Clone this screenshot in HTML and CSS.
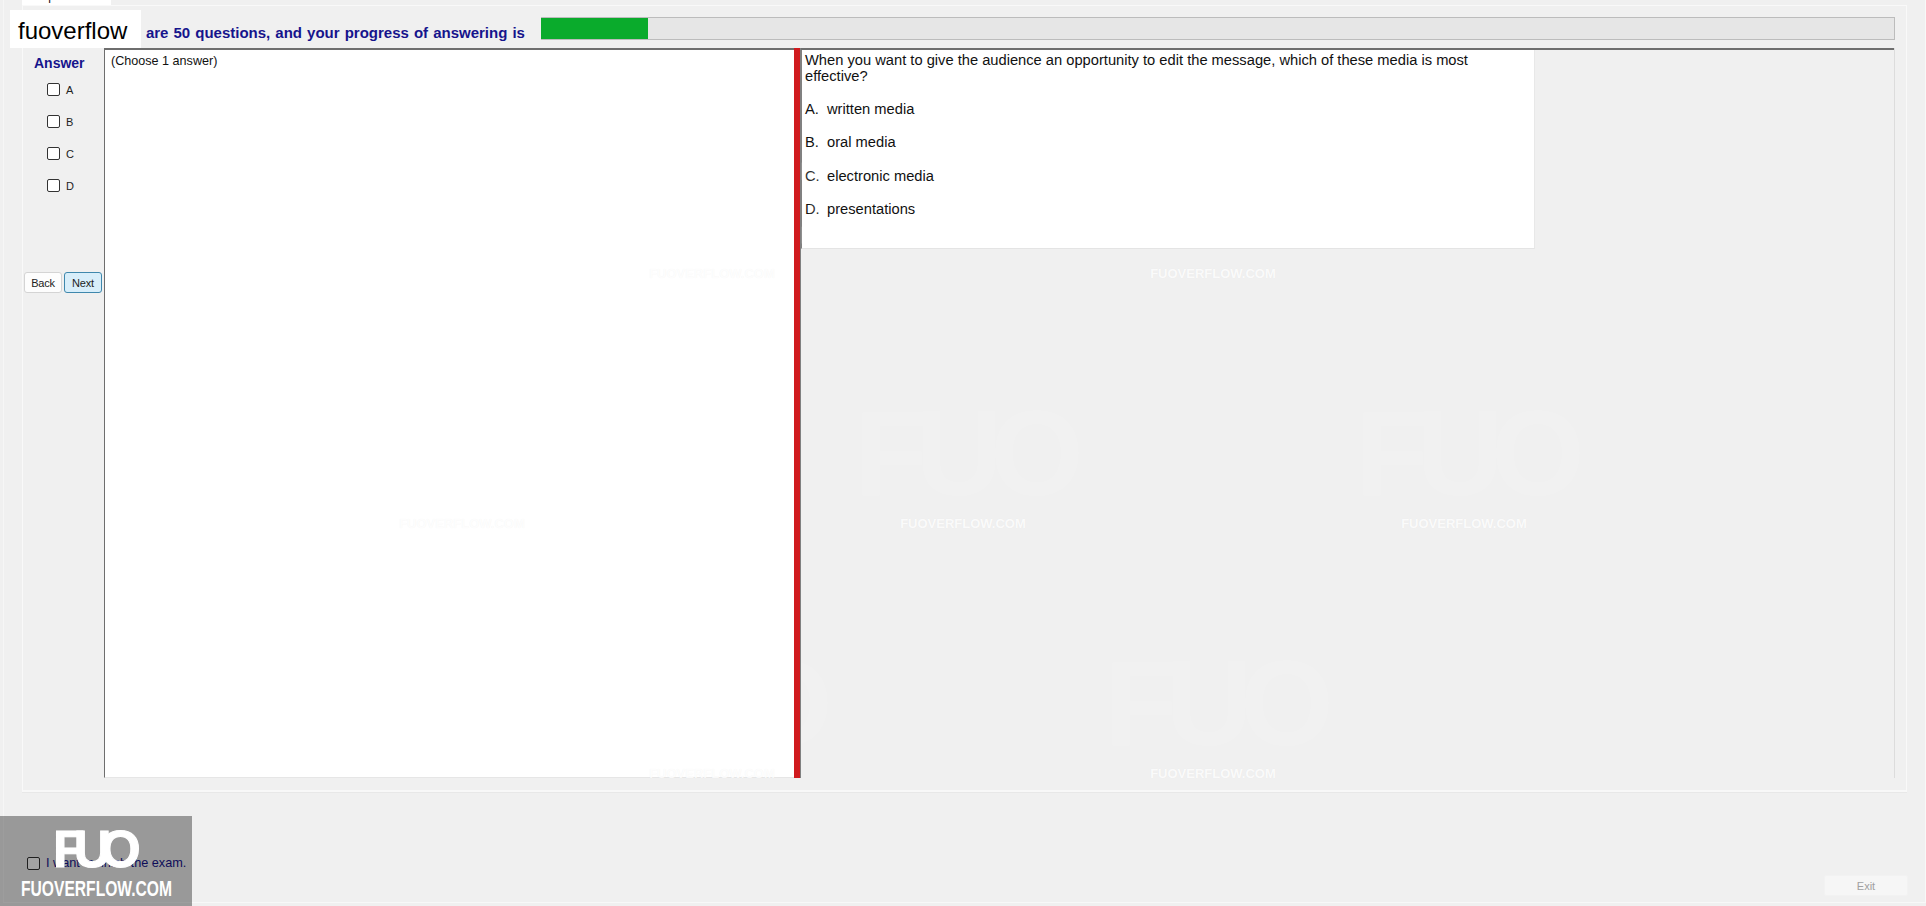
FILE: index.html
```html
<!DOCTYPE html>
<html>
<head>
	<meta charset="utf-8">
	<title>Exam</title>
	<link rel="stylesheet" href="styles.css">
</head>
<body>
	<div class="window">
		<div class="tabs">
			<div class="tab">Multiple Choices</div>
		</div>

		<div class="tabPage">
			<div class="progressRow">
				<span class="progressText"><span class="progressLead">There</span> are 50 questions, and your progress of answering is</span>
				<div class="progressBar"><div class="progressFill"></div></div>
			</div>

			<div class="examArea">
				<div class="answerCol">
					<div class="answerTitle">Answer</div>
					<label class="answerItem"><input type="checkbox" class="check">A</label>
					<label class="answerItem"><input type="checkbox" class="check">B</label>
					<label class="answerItem"><input type="checkbox" class="check">C</label>
					<label class="answerItem"><input type="checkbox" class="check">D</label>
					<div class="navBtns">
						<button class="navBtn">Back</button>
						<button class="navBtn navBtnActive">Next</button>
					</div>
				</div>

				<div class="choosePane">(Choose 1 answer)</div>
				<div class="splitter"></div>

				<div class="questionPane">
					<div class="questionBox">
						<p class="questionText">When you want to give the audience an opportunity to edit the message, which of these media is most effective?</p>
						<div class="options">
							<div class="option"><span class="optLetter">A.</span>written media</div>
							<div class="option"><span class="optLetter">B.</span>oral media</div>
							<div class="option"><span class="optLetter">C.</span>electronic media</div>
							<div class="option"><span class="optLetter">D.</span>presentations</div>
						</div>
					</div>
				</div>
			</div>
		</div>

		<div class="footer">
			<label class="finish"><input type="checkbox" class="check">I want to finish the exam.</label>
			<button class="exitBtn" disabled>Exit</button>
		</div>
	</div>

	<!-- things lying over the form -->
	<div class="brandBox">fuoverflow</div>

	<div class="watermarks">
		<div class="wmRow">
			<div class="wm"><div class="wmLogo">FUO</div><div class="wmText">FUOVERFLOW.COM</div></div>
			<div class="wm"><div class="wmLogo">FUO</div><div class="wmText">FUOVERFLOW.COM</div></div>
		</div>
		<div class="wmRow wmRowOffset">
			<div class="wm"><div class="wmLogo">FUO</div><div class="wmText">FUOVERFLOW.COM</div></div>
			<div class="wm"><div class="wmLogo">FUO</div><div class="wmText">FUOVERFLOW.COM</div></div>
			<div class="wm"><div class="wmLogo">FUO</div><div class="wmText">FUOVERFLOW.COM</div></div>
		</div>
		<div class="wmRow">
			<div class="wm"><div class="wmLogo">FUO</div><div class="wmText">FUOVERFLOW.COM</div></div>
			<div class="wm"><div class="wmLogo">FUO</div><div class="wmText">FUOVERFLOW.COM</div></div>
		</div>
	</div>

	<div class="logoBox">
		<div class="logoMark">FUO</div>
		<div class="logoText">FUOVERFLOW.COM</div>
	</div>
</body>
</html>
```

FILE: styles.css
```css
html,
body {
	margin: 0;
	padding: 0;
	background-color: #f0f0f0;
	font-family: "Liberation Sans", Arial, sans-serif;
	color: #111;
}

.window {
	box-sizing: border-box;
	width: 1923px;
	height: 903px;
	margin-left: 3px;
	padding-left: 18px;
	display: flex;
	flex-direction: column;
	border-left: 1px solid #f6f6f6;
	border-right: 1px solid #f8f8f8;
	border-bottom: 1px solid #f8f8f8;
}

.tabs {
	height: 5px;
	display: flex;
}

.tab {
	width: 89px;
	height: 5px;
	background-color: #fff;
	box-sizing: border-box;
	padding: 0 0 3px 1px;
	display: flex;
	align-items: flex-end;
	overflow: hidden;
	font-size: 12px;
	line-height: 12px;
	white-space: nowrap;
}

.tabPage {
	box-sizing: border-box;
	width: 1885px;
	height: 787px;
	border: 1px solid #f9f9f9;
	border-bottom: 2px solid #f8f8f8;
	box-shadow: 0 1px 0 #e8e8e8, 0 6px 0 -5px #f8f8f8;
}

.progressRow {
	height: 42px;
	display: flex;
	align-items: center;
	padding-left: 74px;
	padding-right: 11px;
}

.progressText {
	font-size: 15px;
	font-weight: bold;
	word-spacing: 0.9px;
	color: #16148c;
	white-space: nowrap;
	margin-top: 10px;
}

.progressLead {
	margin-right: 3px;
}

.progressBar {
	flex: 1;
	height: 23px;
	margin-left: 16px;
	margin-top: 3px;
	box-sizing: border-box;
	background-color: #e6e6e6;
	border: 1px solid #bcbcbc;
	border-left: none;
}

.progressFill {
	width: 107px;
	height: 21px;
	background-color: #0aab2c;
}

.examArea {
	height: 730px;
	margin-right: 11px;
	display: grid;
	grid-template-columns: 81px 690px 7px 1fr;
	border-right: 1px solid #dcdcdc;
}

.answerCol {
	display: flex;
	flex-direction: column;
	align-items: flex-start;
}

.answerTitle {
	font-size: 14px;
	font-weight: bold;
	color: #16148c;
	line-height: 16px;
	padding: 7px 0 0 11px;
}

.answerItem {
	display: flex;
	align-items: center;
	height: 13px;
	font-size: 11px;
	margin: 13px 0 6px 24px;
	color: #222;
}

.answerTitle + .answerItem {
	margin-top: 12px;
}

.check {
	width: 13px;
	height: 13px;
	margin: 0 6px 0 0;
	appearance: none;
	background-color: #fff;
	border: 1px solid #333;
	border-radius: 2px;
	box-sizing: border-box;
}

.navBtns {
	display: flex;
	gap: 2px;
	margin: 74px 0 0 1px;
}

.navBtn {
	width: 38px;
	height: 21px;
	padding: 0;
	font-family: inherit;
	font-size: 11px;
	letter-spacing: -0.2px;
	color: #222;
	background-color: #fdfdfd;
	border: 1px solid #d4d4d4;
	border-radius: 3px;
}

.navBtnActive {
	background-color: #d8eefa;
	border-color: #3f88ad;
}

.choosePane {
	background-color: #fff;
	border-top: 2px solid #6e6e6e;
	border-left: 1px solid #6e6e6e;
	border-bottom: 1px solid #e6e6e6;
	padding: 4px 0 0 6px;
	font-size: 12.6px;
	line-height: 15px;
}

.splitter {
	position: relative;
	z-index: 2;
	background-color: #d01a1e;
	border-right: 1px solid #808080;
}

.questionPane {
	border-top: 2px solid #6e6e6e;
}

.questionBox {
	box-sizing: border-box;
	width: 734px;
	height: 199px;
	background-color: #fff;
	border-left: 1px solid #808080;
	border-bottom: 1px solid #e4e4e4;
	border-right: 1px solid #e8e8e8;
	padding: 2px 0 0 3px;
	font-size: 14.7px;
	line-height: 16px;
	color: #111;
}

.questionText {
	margin: 0;
	width: 700px;
}

.options {
	display: flex;
	flex-direction: column;
	gap: 17.4px;
	margin-top: 17px;
}

.optLetter {
	display: inline-block;
	width: 22px;
}

.footer {
	flex: 1;
	display: flex;
	justify-content: space-between;
	align-items: flex-end;
	padding: 0 17px 6px 5px;
}

.finish {
	display: flex;
	align-items: center;
	font-size: 12.7px;
	color: #16148c;
	margin-bottom: 26px;
}

.exitBtn {
	width: 84px;
	height: 21px;
	padding: 0;
	font-family: inherit;
	font-size: 11px;
	color: #a0a0a0;
	background-color: #f6f6f6;
	border: 1px solid #f2f2f2;
	border-radius: 2px;
}

.brandBox {
	position: absolute;
	left: 10px;
	top: 10px;
	width: 131px;
	height: 38px;
	box-sizing: border-box;
	padding-left: 8px;
	background-color: #fff;
	color: #000;
	font-size: 24px;
	line-height: 41px;
}

.watermarks {
	position: absolute;
	left: 0;
	top: 147px;
	display: flex;
	flex-direction: column;
	gap: 115px;
	pointer-events: none;
}

.wmRow {
	height: 135px;
	display: flex;
	gap: 261px;
	padding-left: 592px;
}

.wmRowOffset {
	padding-left: 342px;
}

.wm {
	width: 240px;
	text-align: center;
}

.wmLogo {
	height: 117px;
	font-size: 120px;
	line-height: 113px;
	font-weight: bold;
	letter-spacing: -12px;
	color: rgba(255, 255, 255, 0.12);
}

.wmText {
	font-size: 13px;
	line-height: 20px;
	font-weight: bold;
	color: rgba(255, 255, 255, 0.85);
	text-shadow: 0 0 1px rgba(0, 0, 0, 0.05);
}

.logoBox {
	position: absolute;
	left: 0;
	top: 816px;
	width: 192px;
	height: 90px;
	background-color: rgba(0, 0, 0, 0.36);
	z-index: 3;
}

.logoMark {
	margin: 10px 0 0 53px;
	height: 46px;
	font-size: 52px;
	line-height: 46px;
	font-weight: bold;
	letter-spacing: -11px;
	color: #fff;
	-webkit-text-stroke: 1px #fff;
}

.logoText {
	margin: 5px 0 0 21px;
	font-size: 22px;
	line-height: 24px;
	font-weight: bold;
	color: #fff;
	white-space: nowrap;
	transform: scaleX(0.71);
	transform-origin: left center;
}
```
